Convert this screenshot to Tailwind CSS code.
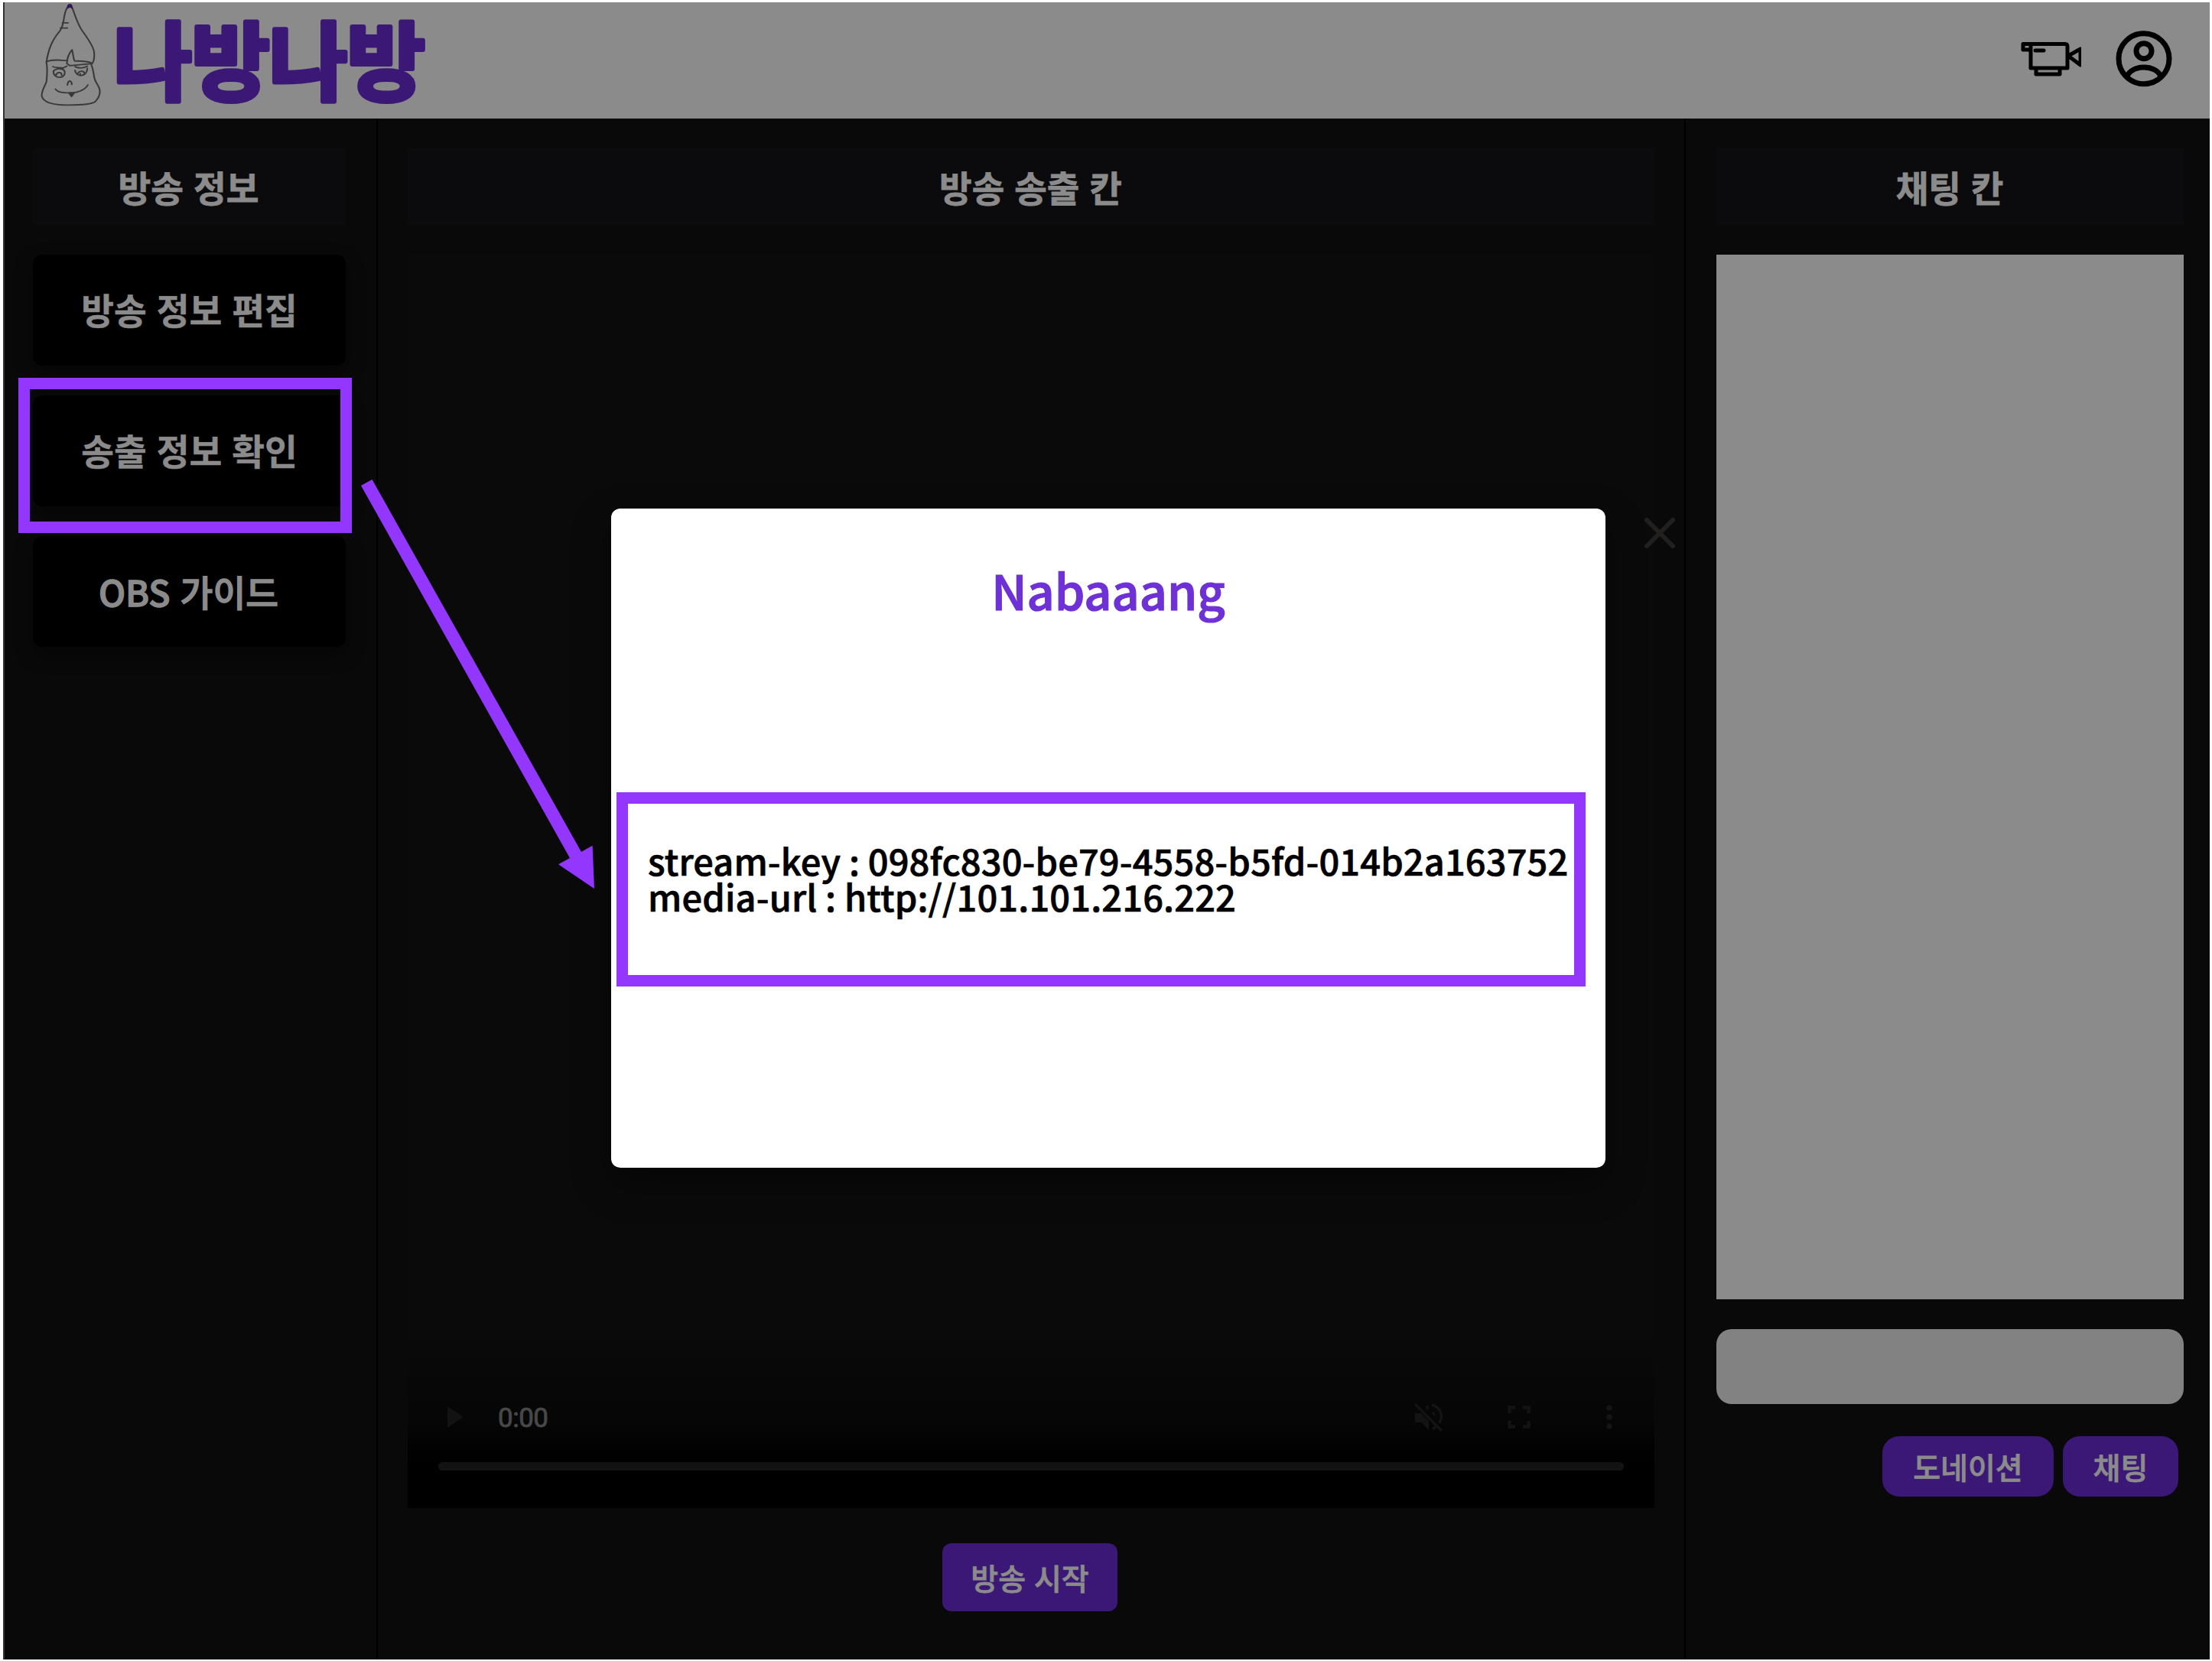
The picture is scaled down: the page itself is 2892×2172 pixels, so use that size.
<!DOCTYPE html>
<html lang="ko">
<head>
<meta charset="utf-8">
<title>나방나방</title>
<script src="https://cdn.jsdelivr.net/npm/@tailwindcss/browser@4"></script>
</head>
<body class="bg-white">
<div class="relative w-[2892px] h-[2172px] overflow-hidden bg-white pt-[3px] pl-[4px] pr-[3px] pb-[2px] font-['Noto_Sans_CJK_KR',sans-serif] text-[#8b8b8b]">
  <div class="flex h-full flex-col border-l-2 border-[#333] bg-[#090909]">
    <!-- Header -->
    <header class="flex h-[152px] shrink-0 items-start justify-between bg-[#8b8b8b]">
      <div class="flex">
        <svg class="ml-[44px] h-[143px] w-[84px]" viewBox="130 9 220 430" preserveAspectRatio="none" fill="none" stroke="#3a3a3a" stroke-width="5.500" stroke-linecap="round" stroke-linejoin="round">
          <path d="M228 32C213 66 222 92 204 122C178 158 165 190 158 245C163 275 160 295 158 322C150 345 141 358 142 378C148 402 180 414 236 413C280 413 315 408 325 400C343 378 343 358 338 344C330 325 321 315 321 297C319 280 315 262 310 248"/>
          <path d="M247 32C256 62 262 84 275 111C297 150 313 168 321 201C323 220 322 238 315 250M158 243C180 230 210 238 226 238M228 250C229 228 237 207 246 196C250 215 250 232 255 240C275 239 295 240 315 248M228 250L238 258L315 250M213 90L232 90M206 110L230 110"/>
          <path d="M180 262C190 270 205 262 214 268M214 268L228 260M256 262C270 270 285 268 298 260M182 280C180 310 222 312 221 285C220 265 190 268 182 280M190 296C195 282 212 282 210 296M256 276C257 305 298 305 298 268M266 290C268 278 286 276 288 288M274 290V292M230 334C232 314 244 314 245 332M189 350C200 366 225 366 238 364C265 368 290 352 300 334"/>
          <path d="M236 368H252L244 380Z" fill="#333" stroke-width="5"/>
          <path d="M230 32C231 14 244 12 246 32L238 26Z" fill="#3b1876" stroke="#2d1a55" stroke-width="5"/>
        </svg>
        <svg class="ml-[14px] h-[152px] w-[430px] overflow-visible" viewBox="0 0 430 152" role="img" aria-label="나방나방">
          <text x="0" y="120" font-size="112" font-weight="700" textLength="408" fill="#3b1876" stroke="#3b1876" stroke-width="6" stroke-linejoin="round">나방나방</text>
        </svg>
      </div>
      <div class="flex gap-[42px] pt-[34px] pr-[46px]">
        <svg class="h-20 w-[84px]" viewBox="0 0 84 80" fill="none" stroke="#000" stroke-width="5" stroke-linejoin="round">
          <path d="M16 20.500H63Q66 20.500 66 24V52H18V20.500M16 20.500H8V28H18M25 54V60H56V54M67 36L83 27V48Z"/><path d="M24 29H35" stroke-linecap="round"/>
        </svg>
        <svg class="h-20 w-20" viewBox="0 0 80 80" fill="none" stroke="#000" stroke-width="7">
          <circle cx="40" cy="39.700" r="33"/><circle cx="40" cy="29.700" r="10"/><path d="M18 63C24 47 56 47 62 63"/>
        </svg>
      </div>
    </header>
    <div class="flex min-h-0 flex-1">
      <!-- Sidebar -->
      <aside class="flex w-[488px] shrink-0 flex-col gap-[39px] border-r-2 border-black pt-[39px] pr-[40px] pl-[37px] text-[46.500px] font-bold">
        <h2 class="flex h-[100px] items-center justify-center bg-[#0b0b0d] pr-[2px] pb-[1px] [-webkit-text-stroke:0.8px_#8b8b8b]">방송 정보</h2>
        <button class="h-[145px] rounded-xl bg-black pb-[3px] font-bold shadow-[0_10px_24px_#000]/40 [-webkit-text-stroke:0.5px_#8b8b8b]">방송 정보 편집</button>
        <button class="h-[145px] rounded-xl bg-black pb-[3px] font-bold shadow-[0_10px_24px_#000]/40 [-webkit-text-stroke:0.5px_#8b8b8b]">송출 정보 확인</button>
        <button class="h-[145px] rounded-xl bg-black pr-[2px] pb-[2px] font-medium shadow-[0_10px_24px_#000]/40 [-webkit-text-stroke:1.4px_#8b8b8b]">OBS 가이드</button>
      </aside>
      <!-- Broadcast -->
      <main class="flex w-[1710px] shrink-0 flex-col items-center border-r-2 border-black px-[39px] pt-[39px]">
        <h2 class="flex h-[100px] w-full items-center justify-center bg-[#0b0b0d] pr-[1px] pb-[1px] text-[46.300px] font-bold [-webkit-text-stroke:0.8px_#8b8b8b]">방송 송출 칸</h2>
        <section class="mt-[39px] flex h-[1639px] w-full flex-col justify-end bg-[#0a0a0a]">
          <div class="flex h-[232px] flex-col bg-linear-to-b from-[#0a0a0a] via-[#060606] to-black px-[40px] pt-[93px]">
            <div class="flex h-[40px] items-center text-[#484848]">
              <svg class="ml-[12px] h-7 w-[21px]" viewBox="0 0 21 28"><path d="M0 0L21 14L0 28Z" fill="#121212"/></svg>
              <span class="ml-[45px] w-[69px] pt-[2px] font-[Roboto,sans-serif] text-[35px] leading-none tracking-[-0.5px] [-webkit-text-stroke:0.8px_#484848]">0:00</span>
              <svg class="ml-auto h-[38px] w-[38px]" viewBox="0 0 38 38" fill="none" stroke="#131313" stroke-width="3.500"><path d="M1 14H9L19 24V36L9 26H1Z" fill="#131313" stroke="none"/><path d="M1 2L36 37M23 3C35 6 38 18 33 27M24 35L29 31M17 4V9M24 13L27 17"/></svg>
              <svg class="ml-[84px] h-[30px] w-[30px]" viewBox="0 0 30 30" fill="none" stroke="#131313" stroke-width="4.500"><path d="M2.500 10V2.500H10M20 2.500H27.500V10M27.500 20V27.500H20M10 27.500H2.500V20"/></svg>
              <svg class="mr-[15px] ml-[99px] h-8 w-2" viewBox="0 0 8 32" fill="#141414"><circle cx="4" cy="4" r="3.800"/><circle cx="4" cy="16" r="3.800"/><circle cx="4" cy="28" r="3.800"/></svg>
            </div>
            <div class="mt-[39px] h-[11px] rounded-full bg-[#121212]"></div>
          </div>
        </section>
        <button class="mt-[46px] mr-[3px] h-[89px] w-[229px] rounded-xl bg-[#3b1876] text-[39px] font-medium [-webkit-text-stroke:0.8px_#8b8b8b]">방송 시작</button>
      </main>
      <!-- Chat -->
      <aside class="flex flex-1 flex-col pt-[39px] pr-[34px] pl-[40px]">
        <h2 class="flex h-[100px] items-center justify-center bg-[#0b0b0d] pr-[1px] pb-[1px] text-[46.300px] font-bold [-webkit-text-stroke:0.8px_#8b8b8b]">채팅 칸</h2>
        <div class="mt-[39px] h-[1366px] bg-[#8b8b8b]"></div>
        <div class="mt-[39px] h-[98px] rounded-[20px] bg-[#828282]"></div>
        <div class="mt-[42px] mr-[7px] flex justify-end gap-[12px] text-[39px] font-medium [-webkit-text-stroke:0.8px_#8b8b8b]">
          <button class="h-[79px] w-[224px] rounded-[22px] bg-[#3b1876]">도네이션</button>
          <button class="h-[79px] w-[151px] rounded-[22px] bg-[#3b1876]">채팅</button>
        </div>
      </aside>
    </div>
  </div>

  <!-- Modal -->
  <div class="absolute top-[665px] left-[799px] flex h-[862px] w-[1300px] flex-col items-center rounded-xl bg-white pt-[70px] shadow-[0_20px_50px_#000]/40">
    <h3 class="text-[63px] leading-[72px] font-medium text-[#6d31d6] [-webkit-text-stroke:1.2px_#6d31d6]">Nabaaang</h3>
    <div lang="en" class="mt-[294px] w-full pl-[48px] text-[47px] leading-[47px] font-medium tracking-[0.13px] whitespace-nowrap text-black [-webkit-text-stroke:0.7px_#000] [font-feature-settings:'calt'_0]">
      <p>stream-key : 098fc830-be79-4558-b5fd-014b2a163752</p>
      <p>media-url : http://101.101.216.222</p>
    </div>
  </div>
  <svg class="absolute top-[677px] left-[2150px] h-10 w-10" viewBox="0 0 40 40" stroke="#221f1f" stroke-width="6" stroke-linecap="round"><path d="M3 3L37 37M37 3L3 37"/></svg>

  <!-- Annotations -->
  <div class="absolute top-[494px] left-[24px] h-[203px] w-[436px] border-[15px] border-[#9337ff]"></div>
  <div class="absolute top-[1036px] left-[806px] h-[254px] w-[1267px] border-[15px] border-[#9337ff]"></div>
  <svg class="absolute top-[620px] left-[465px] h-[550px] w-[320px]" viewBox="465 620 320 550" fill="#9337ff"><path d="M472 635L486.500 627L760 1114L774.600 1105.700L777 1162L730 1130.300L745 1122Z"/></svg>
</div>
</body>
</html>
